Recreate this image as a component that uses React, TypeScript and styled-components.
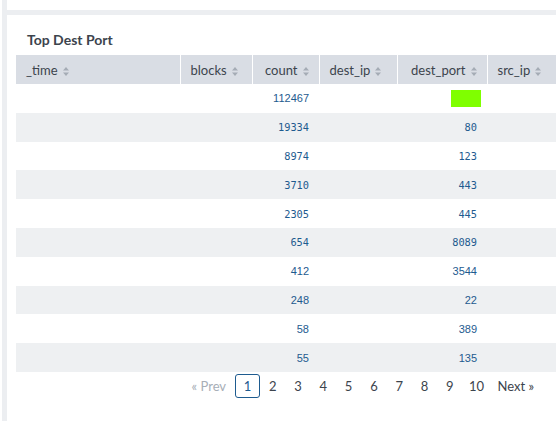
import React from "react";
import styled, { createGlobalStyle } from "styled-components";

const Global = createGlobalStyle`
  html, body { margin: 0; padding: 0; background: #fff; }
  body { font-family: Lato, "Open Sans", sans-serif; color: #3c444d; }
`;

const Page = styled.div`
  width: 556px;
  height: 421px;
  overflow: hidden;
  display: flex;
  padding-left: 2px;
  box-sizing: border-box;
`;

const Stripe = styled.div`
  width: 5px;
  flex: none;
  background: #eceef1;
`;

const Main = styled.div`
  flex: 1;
  min-width: 0;
  display: flex;
  flex-direction: column;
`;

const PrevPanel = styled.div`
  height: 10px;
  background: #fff;
`;

const Band = styled.div`
  height: 5px;
  background: #eceef1;
`;

const Panel = styled.div`
  padding: 16px 0 0 9px;
  overflow: hidden;
`;

const Title = styled.h2`
  margin: 0 0 7px 11px;
  font-size: 14px;
  line-height: 17px;
  font-weight: 700;
  color: #3c444d;
`;

const Table = styled.table`
  border-collapse: collapse;
  table-layout: fixed;
  width: 551px;
`;

const Th = styled.th<{ $right?: boolean }>`
  height: 29px;
  padding: 0 10px;
  background: #d9dde4;
  border-right: 1px solid #fff;
  font-size: 13px;
  font-weight: 400;
  color: #3c444d;
  text-align: ${(p) => (p.$right ? "right" : "left")};
  white-space: nowrap;
  box-sizing: border-box;
`;

const Row = styled.tr<{ $alt: boolean }>`
  background: ${(p) => (p.$alt ? "#eef0f2" : "#fff")};
`;

const Td = styled.td<{ $mono?: boolean }>`
  height: 28.8px;
  padding: 0 10px;
  text-align: right;
  color: #1e5b8f;
  font-family: ${(p) =>
    p.$mono ? '"DejaVu Sans Mono", monospace' : '"Liberation Sans", sans-serif'};
  font-size: ${(p) => (p.$mono ? "10.3px" : "11px")};
  box-sizing: border-box;
`;

const Swatch = styled.span`
  display: inline-block;
  width: 30px;
  height: 17px;
  margin-right: -4px;
  background: #7fff00;
  vertical-align: middle;
`;

const Pager = styled.div`
  display: flex;
  justify-content: flex-end;
  align-items: center;
  padding: 2px 13px 0 0;
  font-size: 13px;
`;

const PageItem = styled.span<{
  $active?: boolean;
  $disabled?: boolean;
  $w?: number;
  $pl?: number;
  $pr?: number;
}>`
  display: inline-flex;
  align-items: center;
  justify-content: center;
  flex: none;
  height: 24px;
  box-sizing: border-box;
  ${(p) => (p.$w ? `width: ${p.$w}px;` : "")}
  padding: 0 ${(p) => p.$pr ?? 0}px 0 ${(p) => p.$pl ?? 0}px;
  border: 1px solid ${(p) => (p.$active ? "#1e5b8f" : "transparent")};
  border-radius: 3px;
  color: ${(p) => (p.$disabled ? "#a7aeb7" : p.$active ? "#1e5b8f" : "#3c444d")};
  white-space: nowrap;
`;

const SortIcon = () => (
  <svg width="6" height="9" viewBox="0 0 6 9" style={{ marginLeft: 5, verticalAlign: "-1px" }}>
    <path d="M3 0 L6 3.6 H0 Z" fill="#a5acb5" />
    <path d="M3 9 L6 5.4 H0 Z" fill="#a5acb5" />
  </svg>
);

const columns: { name: string; width: number; right?: boolean }[] = [
  { name: "_time", width: 164 },
  { name: "blocks", width: 72 },
  { name: "count", width: 67, right: true },
  { name: "dest_ip", width: 78 },
  { name: "dest_port", width: 90, right: true },
  { name: "src_ip", width: 80 },
];

const data: [string, string][] = [
  ["112467", ""],
  ["19334", "80"],
  ["8974", "123"],
  ["3710", "443"],
  ["2305", "445"],
  ["654", "8089"],
  ["412", "3544"],
  ["248", "22"],
  ["58", "389"],
  ["55", "135"],
];

export default function App() {
  return (
    <>
      <Global />
      <Page>
        <Stripe />
        <Main>
          <PrevPanel />
          <Band />
          <Panel>
            <Title>Top Dest Port</Title>
            <Table>
              <colgroup>
                {columns.map((c) => (
                  <col key={c.name} style={{ width: c.width }} />
                ))}
              </colgroup>
              <thead>
                <tr>
                  {columns.map((c) => (
                    <Th key={c.name} $right={c.right}>
                      {c.name}
                      <SortIcon />
                    </Th>
                  ))}
                </tr>
              </thead>
              <tbody>
                {data.map(([count, port], i) => (
                  <Row key={i} $alt={i % 2 === 1}>
                    <Td />
                    <Td />
                    <Td $mono={i > 0 && i < 6}>{count}</Td>
                    <Td />
                    <Td $mono={i > 0 && i < 6}>{i === 0 ? <Swatch /> : port}</Td>
                    <Td />
                  </Row>
                ))}
              </tbody>
            </Table>
            <Pager>
              <PageItem $disabled $pl={8} $pr={8}>« Prev</PageItem>
              <PageItem $active $w={25}>1</PageItem>
              {[2, 3, 4, 5, 6, 7, 8, 9].map((n) => (
                <PageItem key={n} $w={25.3}>{n}</PageItem>
              ))}
              <PageItem $w={28}>10</PageItem>
              <PageItem $pl={6} $pr={8}>Next »</PageItem>
            </Pager>
          </Panel>
        </Main>
      </Page>
    </>
  );
}
